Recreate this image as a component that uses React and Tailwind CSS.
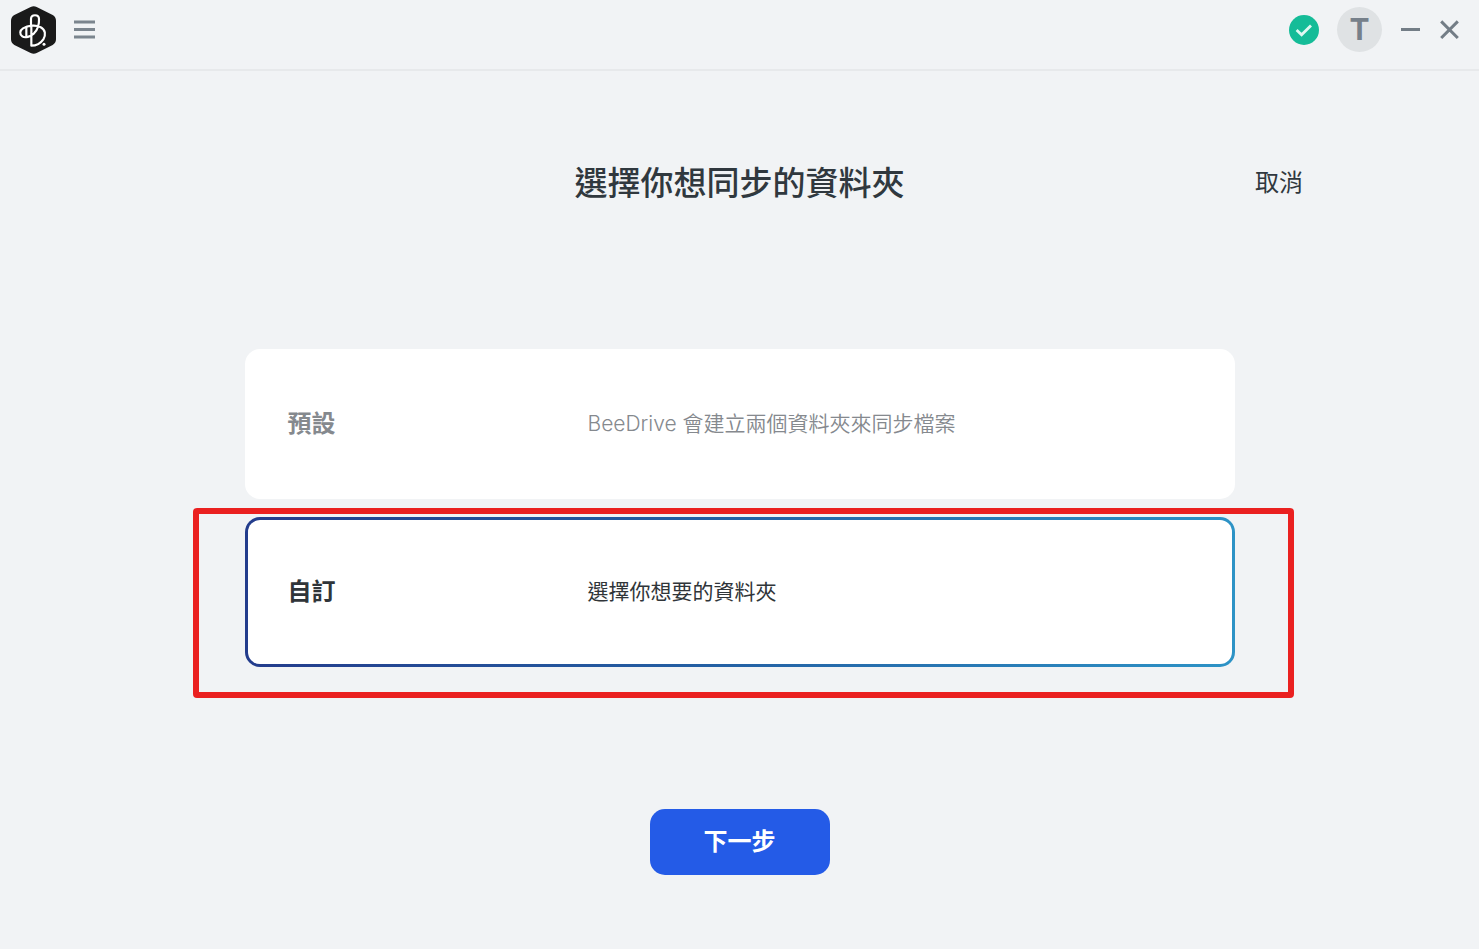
import { useState } from 'react';

const OPTIONS = [
  { id: 'default', title: '預設', text: 'BeeDrive 會建立兩個資料夾來同步檔案' },
  { id: 'custom', title: '自訂', text: '選擇你想要的資料夾' },
];

function Logo() {
  return (
    <svg viewBox="33 17 135 144" className="h-12 w-[45px]" aria-hidden="true">
      <path
        d="M92 20Q101 15 110 20L158 44Q168 50 168 61V117Q168 128 158 134L110 158Q101 163 92 158L43 134Q33 128 33 117V61Q33 50 43 44Z"
        fill="#1a1a1a"
      />
      <g fill="none" stroke="#fff" strokeWidth="6.5" strokeLinecap="round" strokeLinejoin="round">
        <path d="M93 80V56C93 41 117 41 117 56C118 76 111 90 102 99C91 109 75 114 67 108C58 102 59 90 69 84C84 75 108 73 121 80C137 88 138 104 130 117C121 130 108 136 94 136V80" />
        <path d="M79 81V110" />
      </g>
      <circle cx="132" cy="132" r="4.5" fill="#fff" />
    </svg>
  );
}

function Header() {
  return (
    <header className="flex h-[71px] items-start justify-between border-b-2 border-[#e7e9eb] pr-[19px] pl-[11px]">
      <div className="flex h-[60px] items-center gap-[18px]">
        <Logo />
        <button type="button" aria-label="選單" className="text-[#7b858e]">
          <svg viewBox="0 0 21 20" className="h-5 w-[21px]" fill="none" stroke="currentColor" strokeWidth="2.8">
            <path d="M0 2H21M0 9.5H21M0 17H21" />
          </svg>
        </button>
      </div>
      <div className="flex h-[59px] items-center text-[#737d86]">
        <svg viewBox="0 0 30 30" className="mr-[18px] size-[30px]" role="img" aria-label="已連線">
          <circle cx="15" cy="15" r="15" fill="#15bc98" />
          <path d="M7.6 15L12.6 19.8L22 10.4" fill="none" stroke="#e0f8f2" strokeWidth="2.8" />
        </svg>
        <button
          type="button"
          className="mr-[19px] size-[45px] rounded-full bg-[#dfe2e4] font-['Inter',sans-serif] text-[30px] leading-[45px] font-bold text-[#76808a]"
        >
          T
        </button>
        <button type="button" aria-label="最小化" className="mr-5">
          <svg viewBox="0 0 19 20" className="h-5 w-[19px]" stroke="currentColor" strokeWidth="3">
            <path d="M0 9.5H19" />
          </svg>
        </button>
        <button type="button" aria-label="關閉">
          <svg viewBox="0 0 20 20" className="size-5" fill="none" stroke="currentColor" strokeWidth="3">
            <path d="M1.2 1.4L17.8 18M17.8 1.4L1.2 18" />
          </svg>
        </button>
      </div>
    </header>
  );
}

function Option({ option, selected, onSelect }) {
  return (
    <label
      className={
        'block cursor-pointer rounded-[15px] p-[3px] ' +
        (selected ? 'bg-linear-to-r from-[#233c8c] via-[#2462a5] to-[#2d93c6]' : 'bg-white')
      }
    >
      <input
        type="radio"
        name="folder"
        value={option.id}
        checked={selected}
        onChange={onSelect}
        className="sr-only"
      />
      <span
        className={
          'flex h-36 items-center rounded-xl bg-white px-10 ' +
          (selected ? 'text-[#303539]' : 'text-[#85898e]')
        }
      >
        <span className="w-[300px] shrink-0 text-2xl font-semibold">{option.title}</span>
        <span className={'text-[21px] ' + (selected ? 'font-normal' : 'font-[350]')}>{option.text}</span>
      </span>
    </label>
  );
}

export default function App() {
  const [choice, setChoice] = useState('custom');

  return (
    <div className="min-h-screen bg-[#f1f3f5] font-['Inter','Noto_Sans_CJK_TC',sans-serif] text-[#30383e]">
      <Header />
      <main className="pt-[88px] pb-[74px]">
        <div className="grid grid-cols-[1fr_auto_1fr] items-center px-44">
          <h1 className="col-start-2 text-[33px] leading-12 font-medium">選擇你想同步的資料夾</h1>
          <button type="button" className="justify-self-end text-2xl">
            取消
          </button>
        </div>
        <form onSubmit={(e) => e.preventDefault()} className="mx-auto mt-[142px] w-full max-w-[990px]">
          <div className="flex flex-col gap-[18px]">
            {OPTIONS.map((option) => (
              <div key={option.id} className="relative">
                <Option
                  option={option}
                  selected={choice === option.id}
                  onSelect={() => setChoice(option.id)}
                />
                {option.id === 'custom' && (
                  <div className="pointer-events-none absolute -top-[9px] -right-[59px] -bottom-[31px] -left-[52px] rounded-[4px] border-6 border-[#ea2020]" />
                )}
              </div>
            ))}
          </div>
          <button
            type="submit"
            className="mx-auto mt-[142px] block h-[66px] w-[180px] rounded-[15px] bg-[#245be7] text-2xl font-semibold text-white"
          >
            下一步
          </button>
        </form>
      </main>
    </div>
  );
}
